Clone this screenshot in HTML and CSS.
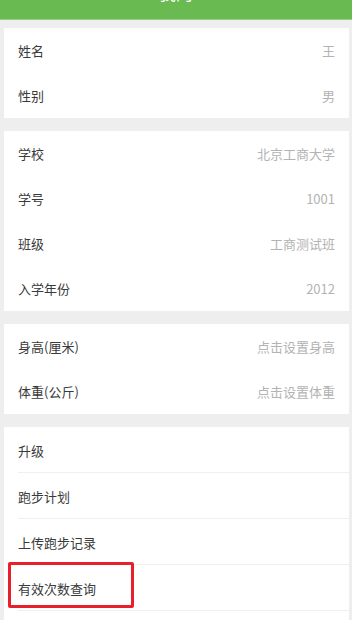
FILE: index.html
```html
<!DOCTYPE html>
<html lang="zh">
<head>
<meta charset="utf-8">
<link rel="stylesheet" href="styles.css">
</head>
<body>
<header class="topbar"><span class="title">我的</span></header>
<main class="content">
  <section class="card">
    <div class="row"><span class="label">姓名</span><span class="value">王</span></div>
    <div class="row"><span class="label">性别</span><span class="value">男</span></div>
  </section>
  <section class="card">
    <div class="row"><span class="label">学校</span><span class="value">北京工商大学</span></div>
    <div class="row"><span class="label">学号</span><span class="value">1001</span></div>
    <div class="row"><span class="label">班级</span><span class="value">工商测试班</span></div>
    <div class="row"><span class="label">入学年份</span><span class="value">2012</span></div>
  </section>
  <section class="card">
    <div class="row"><span class="label">身高(厘米)</span><span class="value">点击设置身高</span></div>
    <div class="row"><span class="label">体重(公斤)</span><span class="value">点击设置体重</span></div>
  </section>
  <section class="card list">
    <div class="row line"><span class="label">升级</span></div>
    <div class="row line"><span class="label">跑步计划</span></div>
    <div class="row line"><span class="label">上传跑步记录</span></div>
    <div class="row line highlight"><span class="label">有效次数查询</span><span class="mark"></span></div>
    <div class="row line"><span class="label">&nbsp;</span></div>
  </section>
</main>
</body>
</html>
```
FILE: styles.css
```css
* { box-sizing: border-box; }
html, body {
  margin: 0;
  padding: 0;
  height: 620px;
  overflow: hidden;
  background: #eeeeee;
  font-family: "Noto Sans CJK SC", "Noto Sans", sans-serif;
}
.topbar {
  height: 20px;
  background: #6aba52;
  border-bottom: 1px solid #93cf81;
  overflow: hidden;
  display: flex;
  justify-content: center;
}
.title {
  color: #fff;
  font-size: 17px;
  line-height: 17px;
  margin-top: -16px;
}
.content {
  display: flex;
  flex-direction: column;
  gap: 13px;
  padding: 8px 3px 0 4px;
}
.card {
  background: #fff;
  display: flex;
  flex-direction: column;
}
.row {
  height: 45px;
  display: flex;
  align-items: center;
  justify-content: space-between;
  padding: 0 14px;
  position: relative;
}
.list .row { height: 46px; }
.row.line::after {
  content: "";
  position: absolute;
  left: 14px;
  right: 0;
  bottom: 0;
  height: 1px;
  background: #efefef;
}
.label {
  font-size: 13px;
  color: #3a3a3a;
}
.value {
  font-size: 13px;
  color: #b3b3b3;
}
.mark {
  position: absolute;
  left: 4px;
  top: -3px;
  width: 126px;
  height: 46px;
  border: 3px solid #e8202c;
  border-radius: 2px;
}
```
